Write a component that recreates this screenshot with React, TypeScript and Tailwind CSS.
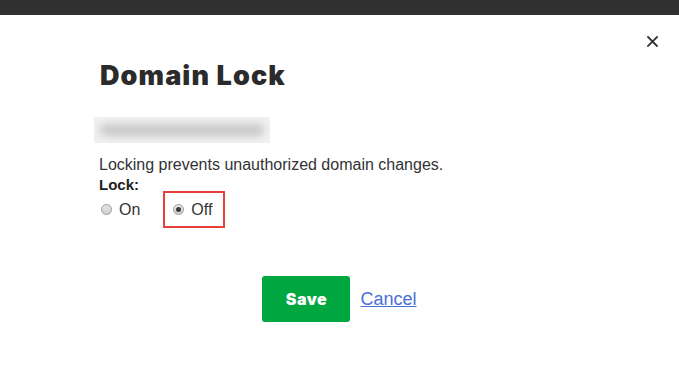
import React from "react";

function Radio({ checked }: { checked?: boolean }) {
  return (
    <span className="relative inline-flex h-[11px] w-[11px] items-center justify-center rounded-full border border-[#9a9a9a] bg-gradient-to-b from-[#e6e6e6] to-[#cfcfcf]">
      {checked && <span className="h-[5px] w-[5px] rounded-full bg-[#3a3a3a]" />}
    </span>
  );
}

export default function App() {
  return (
    <div className="relative h-[381px] w-[679px] overflow-hidden bg-white">
      <div className="h-[15px] w-full bg-[#303030]" />
      <button className="absolute right-[21px] top-[35px] flex h-[12px] w-[12px] items-center justify-center text-[#333]">
        <svg width="11" height="11" viewBox="0 0 11 11">
          <path d="M1 1 L10 10 M10 1 L1 10" stroke="#333" strokeWidth="1.8" strokeLinecap="square" />
        </svg>
      </button>
      <div className="pl-[99px] pt-[45px]">
        <h1 className="pl-[1px] text-[27px] font-black leading-[32px] tracking-[1.1px] text-[#2b2b2b] [font-family:Inter,sans-serif]">
          Domain Lock
        </h1>
        <div className="ml-[-5px] mt-[25px] flex h-[26px] w-[176px] items-center overflow-hidden bg-[#f1f1f1] px-[6px]">
          <span className="h-[12px] w-full rounded-full bg-[#c6c6c6] blur-[4px]" />
        </div>
        <p className="mt-[12px] text-[16px] leading-[20px] text-[#333] [font-family:'Liberation_Sans',Arial,sans-serif]">
          Locking prevents unauthorized domain changes.
        </p>
        <div className="mt-[1px] text-[15px] font-bold leading-[18px] text-[#222] [font-family:'Liberation_Sans',Arial,sans-serif]">
          Lock:
        </div>
        <div className="mt-[-3px] flex items-center text-[16px] text-[#333] [font-family:'Liberation_Sans',Arial,sans-serif]">
          <label className="flex items-center gap-[7px] pl-[2px]">
            <Radio />
            <span>On</span>
          </label>
          <label className="ml-[23px] flex h-[37px] w-[62px] items-center gap-[7px] border-2 border-[#e8413b] pl-[8px]">
            <Radio checked />
            <span>Off</span>
          </label>
        </div>
      </div>
      <div className="mt-[48px] flex items-center justify-center gap-[10px]">
        <button className="h-[46px] w-[88px] rounded-[3px] bg-[#00a63f] text-[16px] font-black tracking-[0.5px] text-white [font-family:Inter,sans-serif]">
          Save
        </button>
        <a href="#" className="text-[18px] text-[#4a6fd6] underline [font-family:'Liberation_Sans',Arial,sans-serif]">
          Cancel
        </a>
      </div>
    </div>
  );
}
